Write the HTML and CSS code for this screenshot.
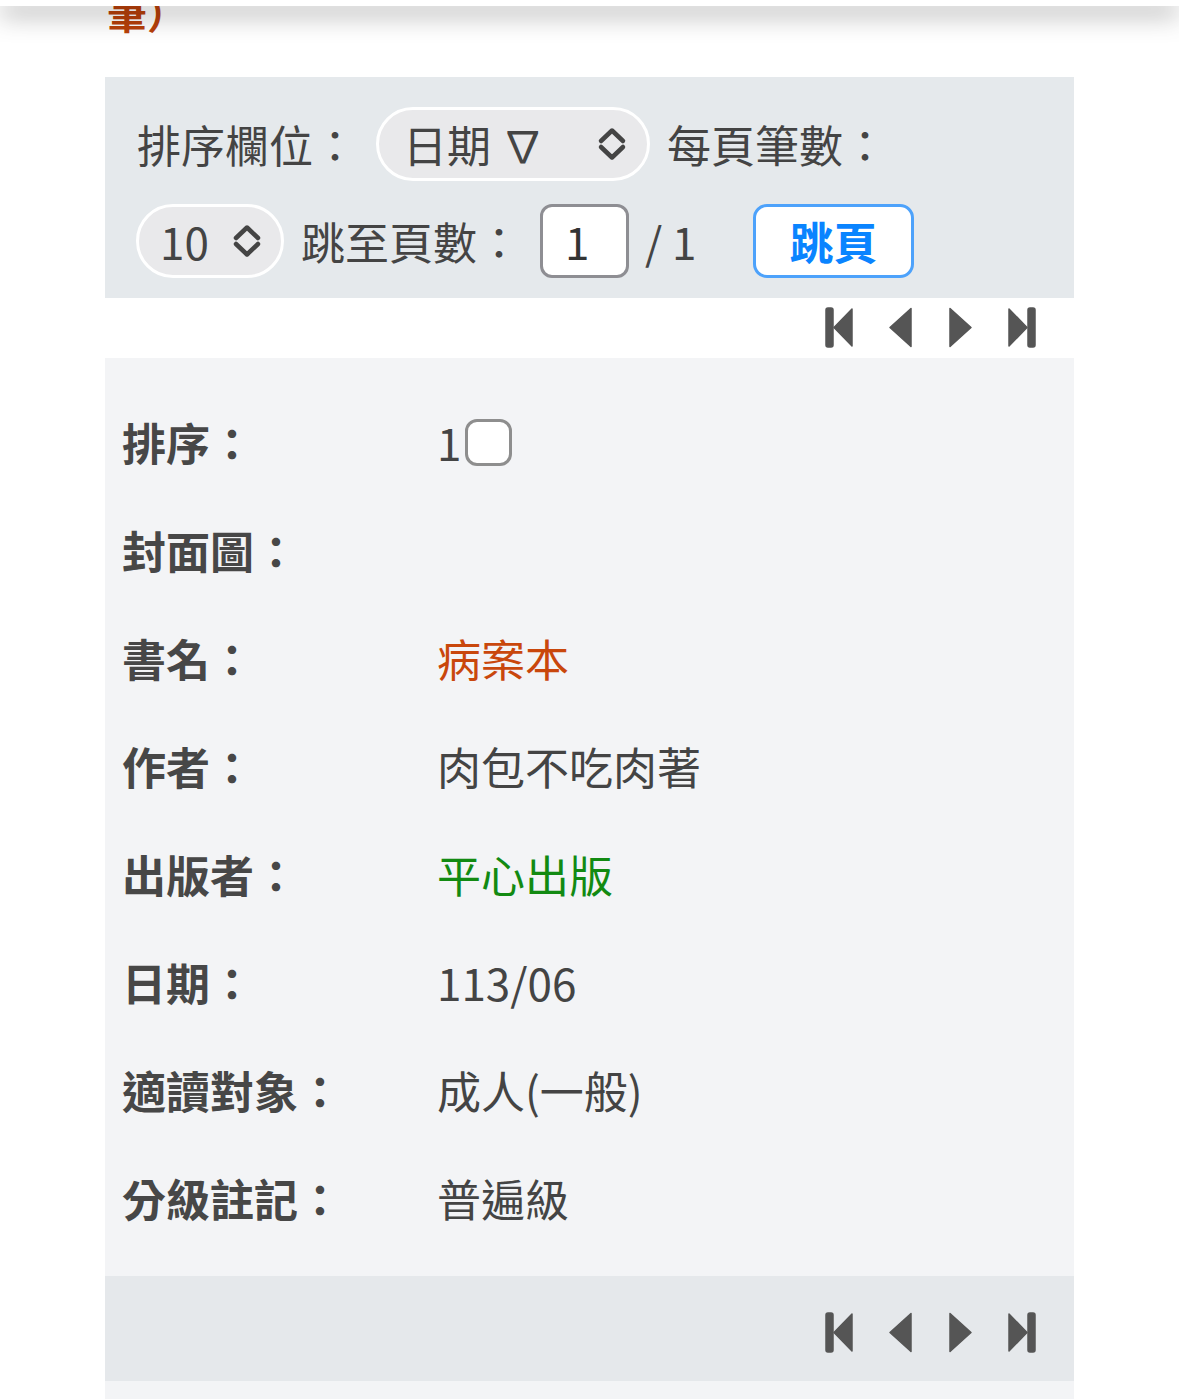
FILE: index.html
```html
<!DOCTYPE html>
<html lang="zh-Hant">
<head>
    <meta charset="UTF-8">
    <meta name="viewport" content="width=device-width, initial-scale=1.0">
    <title>書目列表</title>
    <link rel="stylesheet" href="styles.css">
</head>
<body>
    <div class="topbar"></div>

    <div class="page">
        <h2 class="title">筆）</h2>

        <div class="toolbar">
            <div class="tool-row">
                <span class="lbl lbl-sort">排序欄位：</span>
                <div class="pick pick-sort">
                    <span>日期 ∇</span>
                    <svg class="updown" viewBox="0 0 30 34" width="30" height="34">
                        <path d="M4 14 L15 3.5 L26 14 M4 20 L15 30.5 L26 20" />
                    </svg>
                </div>
                <span class="lbl">每頁筆數：</span>
            </div>
            <div class="tool-row">
                <div class="pick pick-size">
                    <span>10</span>
                    <svg class="updown" viewBox="0 0 30 34" width="30" height="34">
                        <path d="M4 14 L15 3.5 L26 14 M4 20 L15 30.5 L26 20" />
                    </svg>
                </div>
                <span class="lbl lbl-jump">跳至頁數：</span>
                <input class="page-input" type="text" value="1">
                <span class="total">/ 1</span>
                <button class="go">跳頁</button>
            </div>
        </div>

        <div class="pager">
            <svg viewBox="0 0 30 41" width="30" height="41"><rect x="2" y="1" width="7" height="39" rx="2"/><path d="M10 20.5 L28 2 L28 39 Z"/></svg>
            <svg viewBox="0 0 30 41" width="30" height="41"><path d="M5 20.5 L26 1.5 L26 39.5 Z"/></svg>
            <svg viewBox="0 0 30 41" width="30" height="41"><path d="M25 20.5 L4 1.5 L4 39.5 Z"/></svg>
            <svg viewBox="0 0 30 41" width="30" height="41"><rect x="21" y="1" width="7" height="39" rx="2"/><path d="M20 20.5 L2 2 L2 39 Z"/></svg>
        </div>

        <div class="record">
            <div class="row">
                <span class="key">排序：</span>
                <span class="val val-order">1<span class="check"></span></span>
            </div>
            <div class="row">
                <span class="key">封面圖：</span>
                <span class="val"></span>
            </div>
            <div class="row">
                <span class="key">書名：</span>
                <span class="val book">病案本</span>
            </div>
            <div class="row">
                <span class="key">作者：</span>
                <span class="val">肉包不吃肉著</span>
            </div>
            <div class="row">
                <span class="key">出版者：</span>
                <span class="val publisher">平心出版</span>
            </div>
            <div class="row">
                <span class="key">日期：</span>
                <span class="val">113/06</span>
            </div>
            <div class="row">
                <span class="key">適讀對象：</span>
                <span class="val">成人(一般)</span>
            </div>
            <div class="row">
                <span class="key">分級註記：</span>
                <span class="val">普遍級</span>
            </div>
        </div>

        <div class="pager pager-bottom">
            <svg viewBox="0 0 30 41" width="30" height="41"><rect x="2" y="1" width="7" height="39" rx="2"/><path d="M10 20.5 L28 2 L28 39 Z"/></svg>
            <svg viewBox="0 0 30 41" width="30" height="41"><path d="M5 20.5 L26 1.5 L26 39.5 Z"/></svg>
            <svg viewBox="0 0 30 41" width="30" height="41"><path d="M25 20.5 L4 1.5 L4 39.5 Z"/></svg>
            <svg viewBox="0 0 30 41" width="30" height="41"><rect x="21" y="1" width="7" height="39" rx="2"/><path d="M20 20.5 L2 2 L2 39 Z"/></svg>
        </div>

        <div class="record record-next"></div>
    </div>
</body>
</html>
```

FILE: styles.css
```css
      body {
          margin: 0;
          background: #fff;
          color: #444;
          font-family: "Noto Sans CJK TC", "Noto Sans", sans-serif;
          overflow: hidden;
      }
      .topbar {
          position: fixed;
          top: 0;
          left: 0;
          right: 0;
          height: 6px;
          background: #fff;
          box-shadow: 0 6px 26px rgba(0, 0, 0, 0.7);
          z-index: 5;
      }
      .page {
          width: 969px;
          margin-left: 105px;
      }
      .title {
          margin: -12px 0 0 2px;
          height: 89px;
          font-size: 40px;
          line-height: 48px;
          font-weight: bold;
          color: #b8400a;
      }
      .toolbar {
          display: flex;
          flex-direction: column;
          gap: 23px;
          background: #e5e9ec;
          padding: 30px 32px 20px;
      }
      .tool-row {
          display: flex;
          align-items: center;
          height: 74px;
      }
      .lbl {
          font-size: 44px;
          line-height: 74px;
          white-space: nowrap;
      }
      .lbl-sort {
          margin-right: 19px;
      }
      .lbl-jump {
          margin-right: 19px;
      }
      .pick {
          display: flex;
          align-items: center;
          justify-content: space-between;
          box-sizing: border-box;
          height: 74px;
          border: 3px solid #fff;
          border-radius: 37px;
          background: #e9e9eb;
          font-size: 44px;
      }
      .pick-sort {
          width: 274px;
          padding: 0 20px 0 24px;
          margin-right: 17px;
      }
      .pick-size {
          width: 148px;
          padding: 0 19px 0 21px;
          margin-left: -1px;
          margin-right: 17px;
      }
      .updown path {
          fill: none;
          stroke: #444;
          stroke-width: 4.5;
          stroke-linecap: round;
          stroke-linejoin: round;
      }
      .page-input {
          box-sizing: border-box;
          width: 89px;
          height: 74px;
          border: 3px solid #8e8e93;
          border-radius: 12px;
          padding: 0 0 0 22px;
          background: #fff;
          font-family: "Noto Sans CJK TC", sans-serif;
          font-size: 44px;
          color: #333;
          outline: none;
      }
      .total {
          width: 124px;
          padding-left: 16px;
          box-sizing: border-box;
          font-size: 44px;
          white-space: nowrap;
      }
      .go {
          box-sizing: border-box;
          width: 161px;
          height: 74px;
          padding: 0;
          border: 3px solid #4da2fb;
          border-radius: 14px;
          background: #fff;
          color: #0a84ff;
          font-family: "Noto Sans CJK TC", sans-serif;
          font-size: 44px;
          font-weight: bold;
          cursor: pointer;
      }
      .pager {
          display: flex;
          justify-content: flex-end;
          gap: 31px;
          height: 60px;
          box-sizing: border-box;
          padding: 9px 37px 0 0;
          background: #fff;
      }
      .pager svg {
          fill: #555;
          stroke: #555;
          stroke-width: 1.5;
          stroke-linejoin: round;
      }
      .pager-bottom {
          height: 105px;
          padding-top: 36px;
          background: #e5e8eb;
      }
      .record {
          background: #f3f4f6;
          padding: 30px 17px 24px;
      }
      .row {
          display: grid;
          grid-template-columns: 315px 1fr;
          align-items: center;
          height: 108px;
          font-size: 44px;
      }
      .key {
          font-weight: bold;
          color: #474747;
      }
      .val {
          color: #444;
      }
      .val-order {
          display: flex;
          align-items: center;
          gap: 4px;
      }
      .check {
          display: inline-block;
          box-sizing: border-box;
          width: 47px;
          height: 47px;
          border: 3px solid #8e8e8e;
          border-radius: 12px;
          background: #fff;
      }
      .book {
          color: #c9470c;
      }
      .publisher {
          color: #128a12;
      }
      .record-next {
          height: 40px;
          padding: 0;
      }
```
